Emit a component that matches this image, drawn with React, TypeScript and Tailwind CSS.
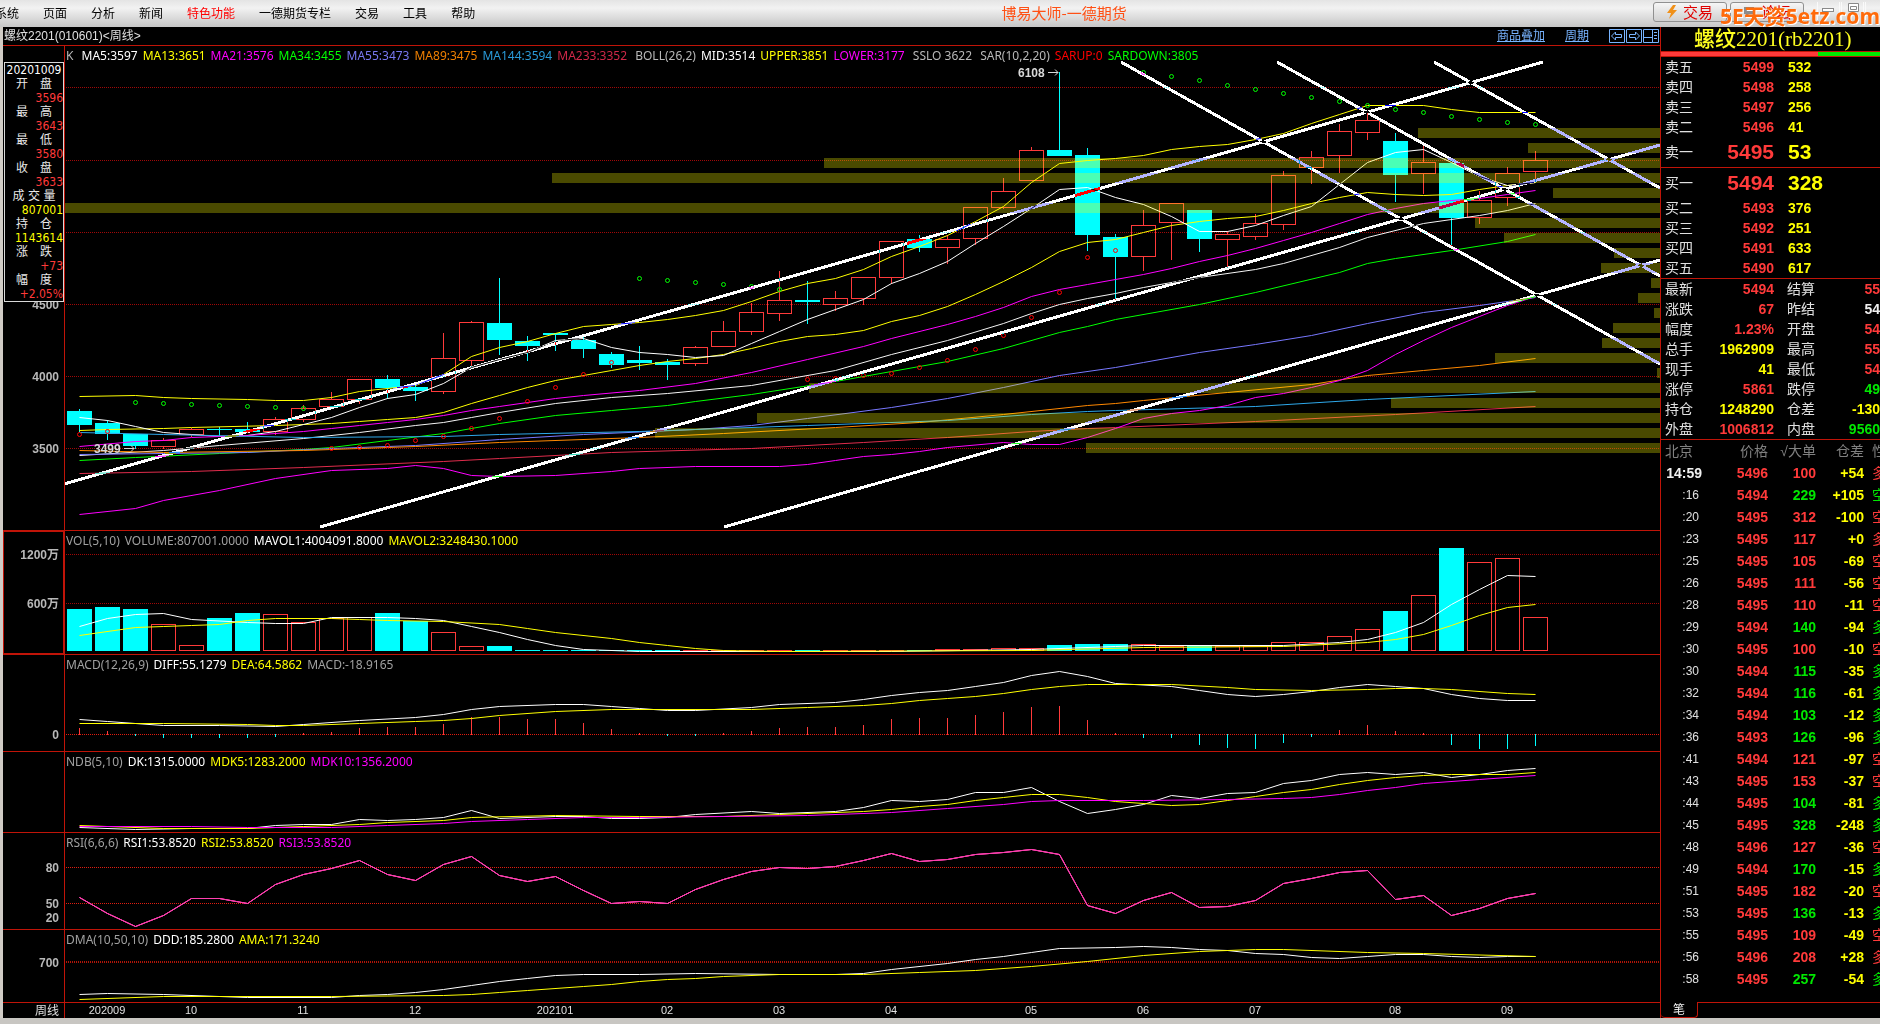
/**
 * Futures terminal: weekly candle chart with its indicator panes on the left,
 * order book, day statistics and tick list on the right.
 *
 * All panes share one coordinate space, so a bar's x is the same in each of them.
 */
import type { ReactNode } from "react";

type Pt = [index: number, y: number];
type Candle = [top: number, bottom: number, high: number, low: number, up: 0 | 1];

const LEFT = 3;
const AXIS = 64;
const RIGHT = 1660;
const STEP = 28;

const RED = "#ff3a3a";
const CYAN = "#00ffff";
const YELLOW = "#ffff00";

const barX = (i: number) => 79 + STEP * i;

const MENU = ["系统", "页面", "分析", "新闻", "特色功能", "一德期货专栏", "交易", "工具", "帮助"];

// body top, body bottom, wick top, wick bottom, rising
const CANDLES: Candle[] = [
  [411, 425, 409, 432, 0], [423, 434, 420, 440, 0], [434, 446, 434, 449, 0],
  [440, 447, 438, 449, 1], [429, 435, 428, 437, 1], [429, 430, 427, 437, 0],
  [429, 432, 422, 433, 0], [419, 432, 417, 435, 1], [408, 420, 405, 422, 1],
  [399, 407, 392, 407, 1], [379, 400, 379, 404, 1], [379, 388, 375, 399, 0],
  [387, 391, 385, 401, 0], [358, 392, 333, 394, 1], [322, 361, 321, 367, 1],
  [323, 340, 278, 355, 0], [341, 346, 336, 361, 0], [333, 335, 333, 351, 0],
  [340, 349, 337, 358, 0], [354, 365, 352, 368, 0], [360, 363, 346, 370, 0],
  [362, 365, 359, 380, 0], [347, 364, 346, 366, 1], [331, 347, 321, 347, 1],
  [312, 332, 303, 335, 1], [300, 314, 271, 321, 1], [300, 302, 281, 324, 0],
  [298, 305, 291, 311, 1], [277, 299, 277, 305, 1], [241, 278, 241, 284, 1],
  [239, 248, 235, 252, 0], [239, 248, 235, 264, 1], [207, 239, 207, 245, 1],
  [191, 208, 178, 209, 1], [150, 181, 147, 181, 1], [150, 156, 72, 156, 0],
  [155, 235, 148, 251, 0], [237, 257, 234, 300, 0], [225, 257, 210, 271, 1],
  [203, 223, 203, 260, 1], [210, 239, 210, 252, 0], [234, 240, 231, 268, 1],
  [223, 237, 214, 240, 1], [175, 225, 171, 230, 1], [157, 168, 151, 184, 1],
  [131, 156, 124, 173, 1], [120, 133, 113, 140, 1], [141, 175, 133, 202, 0],
  [162, 174, 146, 194, 1], [163, 218, 163, 246, 0], [200, 218, 191, 224, 1],
  [173, 198, 167, 206, 1], [160, 172, 151, 182, 1],
];

const MA_LINES: { color: string; points: Pt[] }[] = [
  {
    color: "#ffff00",
    points: [
      [0, 396], [2, 395], [3, 397], [4, 398], [6, 399], [7, 400], [8, 400], [9, 397], [10, 391], [11, 388],
      [12, 385], [13, 374], [14, 356], [15, 347], [16, 341], [17, 333], [18, 326], [19, 324], [20, 322],
      [21, 319], [22, 315], [23, 310], [24, 301], [25, 291], [26, 283], [27, 278], [28, 269], [29, 256],
      [30, 246], [31, 235], [32, 221], [33, 206], [34, 182], [35, 163], [36, 160], [37, 158], [38, 155],
      [39, 149], [40, 146], [41, 144], [42, 139], [43, 133], [44, 123], [45, 114], [46, 105], [48, 105],
      [49, 109], [50, 112], [52, 112],
    ],
  },
  {
    color: "#ffff00",
    points: [
      [0, 430], [1, 429], [3, 428], [4, 427], [7, 425], [9, 423], [10, 421], [11, 419], [12, 417], [13, 412],
      [14, 403], [15, 395], [16, 387], [17, 380], [18, 375], [19, 370], [20, 365], [21, 361], [22, 358],
      [23, 354], [24, 348], [25, 341], [26, 336], [27, 334], [28, 330], [29, 321], [30, 315], [31, 306],
      [32, 294], [33, 281], [34, 267], [35, 251], [36, 242], [37, 239], [38, 232], [39, 225], [40, 221],
      [41, 218], [42, 216], [43, 210], [44, 203], [45, 197], [46, 192], [47, 194], [48, 195], [49, 194],
      [50, 189], [51, 185], [52, 182],
    ],
  },
  {
    color: "#ffffff",
    points: [
      [0, 417], [1, 420], [2, 426], [3, 432], [4, 434], [5, 436], [6, 435], [7, 431], [8, 424], [9, 417],
      [10, 407], [11, 398], [12, 394], [13, 383], [14, 367], [15, 359], [16, 352], [17, 340], [18, 338],
      [19, 347], [20, 352], [21, 354], [22, 357], [23, 355], [24, 343], [25, 331], [26, 319], [27, 309],
      [28, 299], [29, 283], [30, 273], [31, 261], [32, 243], [33, 226], [34, 208], [35, 189], [36, 187],
      [37, 197], [38, 204], [39, 216], [40, 231], [41, 231], [42, 225], [43, 215], [44, 206], [45, 184],
      [46, 162], [47, 152], [48, 149], [49, 162], [50, 176], [51, 185], [52, 182],
    ],
  },
  {
    color: "#ff00ff",
    points: [
      [0, 446], [2, 441], [3, 440], [4, 437], [6, 435], [8, 431], [9, 428], [10, 425], [11, 422], [12, 419],
      [13, 415], [14, 410], [15, 406], [16, 402], [17, 398], [18, 395], [20, 390], [22, 383], [24, 372],
      [26, 359], [28, 346], [29, 338], [31, 324], [32, 316], [33, 307], [34, 296], [35, 289], [36, 284],
      [37, 279], [38, 274], [39, 268], [40, 261], [41, 255], [42, 248], [43, 240], [44, 232], [45, 223],
      [46, 214], [47, 208], [48, 203], [49, 200], [50, 198], [51, 194], [52, 190],
    ],
  },
  {
    color: "#f4f4f4",
    points: [
      [0, 455], [3, 450], [5, 445], [8, 438], [10, 432], [12, 425], [13, 422], [14, 417], [15, 412], [17, 403],
      [19, 397], [21, 393], [24, 385], [27, 370], [29, 354], [31, 340], [33, 323], [34, 313], [35, 304],
      [36, 298], [37, 293], [38, 287], [40, 277], [42, 269], [43, 263], [45, 247], [46, 237], [48, 223],
      [50, 215], [51, 210], [52, 203],
    ],
  },
  {
    color: "#00ff00",
    points: [
      [0, 460], [2, 457], [5, 453], [8, 449], [9, 447], [11, 440], [13, 433], [14, 428], [15, 423], [17, 415],
      [19, 410], [21, 405], [22, 401], [24, 394], [27, 381], [29, 371], [31, 361], [33, 348], [35, 332],
      [36, 326], [37, 319], [40, 304], [42, 292], [45, 272], [46, 263], [47, 258], [49, 250], [51, 241],
      [52, 234],
    ],
  },
  {
    color: "#7878ff",
    points: [
      [0, 454], [3, 453], [6, 452], [9, 448], [12, 445], [15, 439], [18, 434], [22, 429], [24, 425], [26, 418],
      [29, 407], [31, 398], [33, 387], [35, 375], [37, 367], [38, 362], [40, 352], [42, 344], [44, 335],
      [46, 323], [48, 312], [50, 305], [52, 297],
    ],
  },
  {
    color: "#ff8800",
    points: [
      [0, 450], [3, 452], [8, 450], [12, 446], [15, 442], [20, 437], [23, 433], [27, 427], [30, 422],
      [33, 414], [36, 405], [37, 403], [38, 400], [41, 392], [44, 384], [46, 375], [48, 370], [50, 365],
      [52, 358],
    ],
  },
  {
    color: "#2ea8ea",
    points: [
      [0, 432], [3, 434], [8, 437], [13, 436], [15, 434], [20, 431], [26, 425], [31, 420], [34, 414],
      [36, 411], [37, 410], [42, 406], [46, 399], [52, 391],
    ],
  },
  {
    color: "#e02c4c",
    points: [
      [0, 473], [4, 471], [8, 467], [13, 461], [15, 458], [19, 452], [24, 448], [28, 442], [31, 437],
      [34, 431], [36, 428], [37, 427], [42, 421], [47, 414], [52, 406],
    ],
  },
  {
    color: "#ff00ff",
    points: [
      [0, 514], [2, 508], [3, 500], [5, 490], [7, 478], [9, 470], [11, 468], [12, 465], [13, 468], [14, 475],
      [15, 476], [17, 475], [19, 471], [20, 468], [22, 466], [25, 466], [26, 464], [27, 460], [28, 456],
      [29, 454], [30, 451], [31, 447], [33, 442], [34, 444], [35, 444], [36, 437], [37, 428], [38, 418],
      [39, 413], [40, 410], [41, 405], [42, 397], [43, 393], [44, 387], [45, 380], [46, 370], [47, 354],
      [48, 340], [49, 327], [50, 316], [51, 305], [52, 296],
    ],
  },
];

const SAR_DOWN: Pt[] = [
  [2, 402], [3, 403], [4, 404], [5, 405], [6, 406], [7, 407], [8, 408], [20, 278], [21, 280], [22, 282],
  [23, 284], [24, 286], [25, 289], [38, 72], [39, 76], [40, 80], [41, 85], [42, 89], [43, 93], [44, 97],
  [45, 101], [46, 105], [47, 109], [48, 112], [49, 116], [50, 119], [51, 122], [52, 124],
];

const SAR_UP: Pt[] = [
  [0, 434], [1, 431], [9, 448], [10, 447], [11, 445], [12, 440], [13, 436], [14, 428], [15, 418], [16, 401],
  [17, 387], [18, 374], [19, 362], [26, 379], [27, 378], [28, 375], [29, 373], [30, 367], [31, 360],
  [32, 349], [33, 335], [34, 317], [35, 292], [36, 257], [37, 250],
];

// Volume profile, one bar every 15px from the top, given by its left end.
const PROFILE = [
  1418, 1528, 824, 552, 1553, 65, 1475, 1504, 1614, 1601, 1651,
  1638, 1654, 1613, 1602, 1495, 1657, 809, 1391, 757, 655, 1086,
];

const TREND_LINES = [
  [64, 484, 1543, 62],
  [320, 527, 1660, 145],
  [724, 527, 1660, 260],
  [1121, 62, 1660, 364],
  [1277, 62, 1660, 276],
  [1434, 62, 1660, 188],
];

const VOLUME = [
  609, 607, 609, 624, 645, 618, 613, 614, 622, 618, 617, 613, 621, 632, 646, 646, 650, 650, 650, 650,
  650, 650, 650, 650, 650, 650, 650, 650, 650, 650, 650, 649, 649, 648, 648, 645, 644, 644, 644, 646,
  646, 646, 646, 642, 642, 636, 629, 611, 595, 548, 562, 558, 617,
];

const VOL_MA5: Pt[] = [
  [0, 626], [1, 618], [2, 614], [3, 613], [4, 619], [6, 622], [7, 623], [8, 623], [9, 617], [11, 617],
  [12, 618], [13, 620], [14, 626], [15, 632], [16, 639], [17, 645], [18, 649], [20, 651], [29, 651],
  [34, 649], [37, 646], [38, 645], [43, 645], [45, 642], [46, 639], [47, 632], [48, 622], [49, 604],
  [50, 589], [51, 575], [52, 576],
];

const VOL_MA10: Pt[] = [
  [0, 635], [2, 627], [3, 626], [4, 625], [5, 624], [6, 620], [7, 618], [9, 618], [10, 619], [11, 620],
  [13, 621], [15, 624], [16, 628], [17, 632], [19, 638], [20, 642], [21, 645], [22, 648], [23, 650],
  [25, 651], [34, 650], [38, 647], [43, 646], [46, 642], [47, 639], [48, 634], [49, 625], [50, 615],
  [51, 607], [52, 604],
];

const DIFF: Pt[] = [
  [0, 719], [1, 721], [3, 725], [5, 725], [7, 726], [8, 724], [10, 720], [12, 717], [13, 714], [14, 709],
  [15, 706], [17, 704], [18, 704], [19, 706], [20, 708], [21, 710], [22, 710], [24, 707], [25, 704],
  [27, 702], [28, 699], [29, 695], [30, 692], [31, 690], [32, 686], [33, 682], [34, 675], [35, 671],
  [36, 676], [37, 683], [39, 686], [40, 690], [41, 694], [42, 696], [43, 694], [44, 691], [45, 687],
  [46, 684], [47, 686], [48, 688], [49, 694], [50, 698], [51, 700], [52, 700],
];

const DEA: Pt[] = [
  [0, 723], [3, 723], [6, 724], [7, 725], [8, 725], [10, 723], [12, 721], [13, 720], [14, 718], [15, 715],
  [17, 711], [19, 709], [24, 709], [26, 707], [28, 705], [29, 703], [30, 700], [31, 698], [32, 696],
  [33, 693], [34, 689], [35, 686], [36, 684], [39, 684], [41, 687], [42, 689], [44, 690], [46, 689],
  [47, 688], [48, 688], [49, 689], [51, 693], [52, 694],
];

const MACD_BARS = [
  728, 731, 735, 737, 737, 737, 737, 736, 733, 732, 728, 727, 727, 724, 717, 717, 719, 719, 723, 729,
  733, 735, 735, 733, 731, 728, 727, 727, 725, 719, 718, 718, 715, 712, 707, 706, 720, 733, 737, 737,
  744, 747, 748, 742, 736, 730, 725, 731, 733, 744, 748, 748, 745,
];

const DK: Pt[] = [
  [0, 827], [2, 829], [4, 828], [6, 828], [7, 825], [8, 824], [9, 824], [10, 819], [11, 820], [12, 819],
  [13, 817], [14, 810], [15, 818], [17, 816], [18, 816], [19, 818], [20, 818], [21, 817], [22, 814],
  [24, 811], [25, 813], [27, 811], [28, 807], [29, 800], [30, 801], [31, 799], [32, 792], [33, 792],
  [34, 787], [35, 801], [36, 813], [37, 809], [38, 804], [39, 795], [40, 798], [41, 793], [42, 792],
  [43, 783], [44, 780], [45, 774], [46, 772], [47, 774], [48, 772], [49, 777], [50, 774], [51, 770],
  [52, 768],
];

const MDK5: Pt[] = [
  [0, 825], [3, 828], [6, 828], [8, 826], [10, 824], [11, 822], [13, 820], [14, 817], [17, 815], [20, 816],
  [23, 816], [25, 814], [28, 811], [29, 809], [30, 806], [31, 804], [32, 800], [33, 797], [34, 794],
  [35, 794], [36, 797], [37, 801], [39, 805], [40, 804], [41, 800], [42, 796], [43, 792], [44, 789],
  [45, 784], [46, 780], [47, 777], [48, 775], [49, 774], [51, 774], [52, 772],
];

const MDK10: Pt[] = [
  [0, 826], [4, 826], [6, 827], [9, 827], [11, 825], [13, 823], [14, 821], [16, 819], [18, 817], [20, 817],
  [23, 816], [26, 815], [29, 812], [31, 808], [33, 804], [34, 801], [35, 800], [38, 800], [41, 799],
  [43, 798], [44, 797], [45, 794], [46, 790], [47, 787], [48, 783], [50, 779], [52, 775],
];

const RSI = [
  897, 913, 926, 915, 898, 898, 903, 884, 874, 868, 860, 874, 880, 864, 856, 875, 881, 876, 890, 903,
  901, 903, 889, 879, 871, 867, 868, 866, 860, 853, 861, 859, 854, 852, 849, 854, 905, 913, 900, 892,
  907, 906, 900, 883, 878, 872, 870, 899, 895, 915, 908, 898, 893,
].map((y, i): Pt => [i, y]);

const DDD: Pt[] = [
  [0, 994], [1, 993], [3, 994], [5, 996], [6, 997], [9, 997], [10, 995], [11, 994], [12, 992], [13, 989],
  [14, 985], [15, 981], [16, 978], [17, 975], [18, 974], [20, 974], [22, 973], [25, 974], [27, 974],
  [28, 973], [29, 969], [31, 963], [32, 959], [33, 956], [34, 952], [35, 948], [37, 947], [38, 946],
  [39, 947], [40, 949], [41, 950], [42, 953], [43, 954], [44, 957], [45, 958], [46, 956], [47, 954],
  [48, 954], [49, 956], [50, 957], [51, 956], [52, 956],
];

const AMA: Pt[] = [
  [0, 999], [3, 996], [9, 996], [13, 995], [14, 994], [15, 992], [16, 990], [18, 986], [19, 984],
  [20, 981], [21, 979], [22, 978], [23, 976], [25, 974], [28, 974], [30, 972], [32, 970], [34, 966],
  [36, 961], [38, 955], [40, 951], [42, 949], [43, 949], [46, 952], [48, 953], [52, 956],
];

const MONTHS: [number, string][] = [
  [1, "202009"], [4, "10"], [8, "11"], [12, "12"], [17, "202101"], [21, "02"], [25, "03"],
  [29, "04"], [34, "05"], [38, "06"], [42, "07"], [47, "08"], [51, "09"],
];

const CURSOR_INFO: [string, string, string][] = [
  ["开　盘", "3596", "text-[#ff3a3a]"],
  ["最　高", "3643", "text-[#ff3a3a]"],
  ["最　低", "3580", "text-[#ff3a3a]"],
  ["收　盘", "3633", "text-[#ff3a3a]"],
  ["成 交 量", "807001", "text-[#ffff00]"],
  ["持　仓", "1143614", "text-[#ffff00]"],
  ["涨　跌", "+73", "text-[#ff3a3a]"],
  ["幅　度", "+2.05%", "text-[#ff3a3a]"],
];

const ASKS = [["卖五", "5499", "532"], ["卖四", "5498", "258"], ["卖三", "5497", "256"], ["卖二", "5496", "41"], ["卖一", "5495", "53"]];
const BIDS = [["买一", "5494", "328"], ["买二", "5493", "376"], ["买三", "5492", "251"], ["买四", "5491", "633"], ["买五", "5490", "617"]];

const R = "text-[#ff3a3a]";
const G = "text-[#00e800]";
const Y = "text-[#ffff00]";
const W = "text-[#f0f0f0]";

const STATS: [string, string, string, string, string, string][] = [
  ["最新", "5494", R, "结算", "55", R],
  ["涨跌", "67", R, "昨结", "54", W],
  ["幅度", "1.23%", R, "开盘", "54", R],
  ["总手", "1962909", Y, "最高", "55", R],
  ["现手", "41", Y, "最低", "54", R],
  ["涨停", "5861", R, "跌停", "49", G],
  ["持仓", "1248290", Y, "仓差", "-130", Y],
  ["外盘", "1006812", R, "内盘", "9560", G],
];

const TICKS: [string, string, string, string, string, string][] = [
  ["14:59", "5496", "100", "+54", "多", R],
  [":16", "5494", "229", "+105", "空", G],
  [":20", "5495", "312", "-100", "空", R],
  [":23", "5495", "117", "+0", "多", R],
  [":25", "5495", "105", "-69", "空", R],
  [":26", "5495", "111", "-56", "空", R],
  [":28", "5495", "110", "-11", "空", R],
  [":29", "5494", "140", "-94", "多", G],
  [":30", "5495", "100", "-10", "空", R],
  [":30", "5494", "115", "-35", "多", G],
  [":32", "5494", "116", "-61", "多", G],
  [":34", "5494", "103", "-12", "多", G],
  [":36", "5493", "126", "-96", "多", G],
  [":41", "5494", "121", "-97", "空", R],
  [":43", "5495", "153", "-37", "空", R],
  [":44", "5495", "104", "-81", "多", G],
  [":45", "5495", "328", "-248", "多", G],
  [":48", "5496", "127", "-36", "空", R],
  [":49", "5494", "170", "-15", "多", G],
  [":51", "5495", "182", "-20", "空", R],
  [":53", "5495", "136", "-13", "多", G],
  [":55", "5495", "109", "-49", "空", R],
  [":56", "5496", "208", "+28", "多", R],
  [":58", "5495", "257", "-54", "多", G],
];

function Line({ points, color }: { points: Pt[]; color: string }) {
  return (
    <polyline
      points={points.map(([i, y]) => `${barX(i) + 0.5},${y + 0.5}`).join(" ")}
      fill="none"
      stroke={color}
    />
  );
}

function Grid({ at, color = "#a00808" }: { at: number[]; color?: string }) {
  return (
    <>
      {at.map((y) => (
        <line key={y} x1={AXIS + 2} x2={RIGHT} y1={y + 0.5} y2={y + 0.5} stroke={color} strokeDasharray="1 1" />
      ))}
    </>
  );
}

function AxisLabel({ y, children }: { y: number; children: string }) {
  return (
    <text
      x={59}
      y={y + 5}
      textAnchor="end"
      className="fill-[#b8b8b8] font-['Liberation_Sans','Noto_Sans_CJK_SC',sans-serif] text-[12px] font-bold"
    >
      {children}
    </text>
  );
}

function Legend({ items }: { items: [string, string][] }) {
  return (
    <div className="absolute left-[63px] top-[2px] flex gap-[5px] whitespace-pre font-['Noto_Sans',sans-serif] text-[12px] leading-4">
      {items.map(([text, color]) => (
        <span key={text} className={color}>
          {text}
        </span>
      ))}
    </div>
  );
}

/** One chart pane; `top` and `height` select its slice of the shared coordinate space. */
function Pane({ top, height, legend, children }: {
  top: number;
  height: number;
  legend?: [string, string][];
  children: ReactNode;
}) {
  return (
    <section className="relative border-b border-[#c01408]">
      <svg viewBox={`${LEFT} ${top} ${RIGHT - LEFT} ${height}`} className="block w-full">
        {children}
        <line x1={AXIS + 0.5} x2={AXIS + 0.5} y1={top} y2={top + height} stroke="#c01408" />
      </svg>
      {legend && <Legend items={legend} />}
    </section>
  );
}

function PricePane() {
  return (
    <Pane
      top={46}
      height={484}
      legend={[
        ["K ", "text-[#b8b8b8]"],
        ["MA5:3597", "text-white"],
        ["MA13:3651", "text-[#ffff00]"],
        ["MA21:3576", "text-[#ff00ff]"],
        ["MA34:3455", "text-[#00ff00]"],
        ["MA55:3473", "text-[#7878f0]"],
        ["MA89:3475", "text-[#f08000]"],
        ["MA144:3594", "text-[#2a9ad8]"],
        ["MA233:3352 ", "text-[#d02848]"],
        ["BOLL(26,2)", "text-[#b8b8b8]"],
        ["MID:3514", "text-white"],
        ["UPPER:3851", "text-[#ffff00]"],
        ["LOWER:3177 ", "text-[#ff00ff]"],
        ["SSLO 3622 ", "text-[#b8b8b8]"],
        ["SAR(10,2,20)", "text-[#b8b8b8]"],
        ["SARUP:0", "text-[#ff0000]"],
        ["SARDOWN:3805", "text-[#00ff00]"],
      ]}
    >
      <Grid at={[87, 160, 232, 304, 376, 448]} />
      <AxisLabel y={304}>4500</AxisLabel>
      <AxisLabel y={376}>4000</AxisLabel>
      <AxisLabel y={448}>3500</AxisLabel>

      {CANDLES.map(([top, bottom, high, low, up], i) => {
        const x = barX(i);
        return up ? (
          <g key={i} stroke={RED} fill="none">
            <path d={`M${x + 0.5} ${high}V${top}M${x + 0.5} ${bottom}V${low}`} />
            <rect x={x - 11.5} y={top + 0.5} width={24} height={bottom - top - 1} />
          </g>
        ) : (
          <g key={i} fill={CYAN}>
            <rect x={x} y={high} width={1} height={low - high} />
            <rect x={x - 12} y={top} width={25} height={bottom - top} />
          </g>
        );
      })}

      {MA_LINES.map((line, i) => (
        <Line key={i} {...line} />
      ))}

      {PROFILE.map((x, i) => (
        <rect key={i} x={x} y={128 + 15 * i} width={RIGHT - x} height={10} fill={YELLOW} opacity={0.29} />
      ))}

      {SAR_DOWN.map(([i, y]) => (
        <ellipse key={i} cx={barX(i) + 0.5} cy={y + 0.5} rx={2} ry={2} fill="none" stroke="#00ff00" />
      ))}
      {SAR_UP.map(([i, y]) => (
        <ellipse key={i} cx={barX(i) + 0.5} cy={y + 0.5} rx={2} ry={2} fill="none" stroke="#ff0000" />
      ))}

      {/* Drawn inverted, so they change colour over bars and at crossings. */}
      {TREND_LINES.map(([x1, y1, x2, y2], i) => (
        <line
          key={i}
          x1={x1}
          y1={y1}
          x2={x2}
          y2={y2}
          stroke="#fff"
          strokeWidth={3}
          shapeRendering="crispEdges"
          className="mix-blend-difference"
        />
      ))}

      <g className="fill-[#d8d8d8] font-['Liberation_Sans',sans-serif] text-[12px] font-bold">
        <text x={94} y={453}>3499</text>
        <text x={1018} y={77}>6108</text>
      </g>
      <path d="M124 448.5h10m-3-3 3 3-3 3M1048 72.5h10m-3-3 3 3-3 3" fill="none" stroke="#d8d8d8" />
    </Pane>
  );
}

function VolumePane() {
  return (
    <Pane
      top={531}
      height={123}
      legend={[
        ["VOL(5,10)", "text-[#a0a0a0]"],
        ["VOLUME:807001.0000", "text-[#a0a0a0]"],
        ["MAVOL1:4004091.8000", "text-white"],
        ["MAVOL2:3248430.1000", "text-[#ffff00]"],
      ]}
    >
      <Grid at={[554, 603]} />
      <rect x={3} y={531} width={61} height={123} fill="none" stroke="#c01408" strokeWidth={2} />
      <AxisLabel y={554}>1200万</AxisLabel>
      <AxisLabel y={603}>600万</AxisLabel>
      {VOLUME.map((y, i) => {
        const x = barX(i);
        return CANDLES[i][4] ? (
          <rect key={i} x={x - 11.5} y={y + 0.5} width={24} height={Math.max(651 - y - 1, 0.5)} fill="none" stroke={RED} />
        ) : (
          <rect key={i} x={x - 12} y={y} width={25} height={651 - y} fill={CYAN} />
        );
      })}
      <Line points={VOL_MA5} color="#ffffff" />
      <Line points={VOL_MA10} color="#ffff00" />
    </Pane>
  );
}

function MacdPane() {
  return (
    <Pane
      top={655}
      height={96}
      legend={[
        ["MACD(12,26,9)", "text-[#a0a0a0]"],
        ["DIFF:55.1279", "text-white"],
        ["DEA:64.5862", "text-[#ffff00]"],
        ["MACD:-18.9165", "text-[#a0a0a0]"],
      ]}
    >
      <Grid at={[734]} color="#e01c10" />
      <AxisLabel y={734}>0</AxisLabel>
      {MACD_BARS.map((y, i) => (
        <rect
          key={i}
          x={barX(i)}
          y={Math.min(y, 734)}
          width={1}
          height={Math.abs(734 - y) + 1}
          fill={y < 734 ? RED : CYAN}
        />
      ))}
      <Line points={DIFF} color="#ffffff" />
      <Line points={DEA} color="#ffff00" />
    </Pane>
  );
}

function NdbPane() {
  return (
    <Pane
      top={752}
      height={80}
      legend={[
        ["NDB(5,10)", "text-[#a0a0a0]"],
        ["DK:1315.0000", "text-white"],
        ["MDK5:1283.2000", "text-[#ffff00]"],
        ["MDK10:1356.2000", "text-[#ff00ff]"],
      ]}
    >
      <Line points={DK} color="#ffffff" />
      <Line points={MDK5} color="#ffff00" />
      <Line points={MDK10} color="#ff00ff" />
    </Pane>
  );
}

function RsiPane() {
  return (
    <Pane
      top={833}
      height={96}
      legend={[
        ["RSI(6,6,6)", "text-[#a0a0a0]"],
        ["RSI1:53.8520", "text-white"],
        ["RSI2:53.8520", "text-[#ffff00]"],
        ["RSI3:53.8520", "text-[#ff00ff]"],
      ]}
    >
      <Grid at={[867, 903]} color="#e01c10" />
      <AxisLabel y={867}>80</AxisLabel>
      <AxisLabel y={903}>50</AxisLabel>
      <AxisLabel y={917}>20</AxisLabel>
      {/* RSI1-3 share one period, so the three lines coincide. */}
      <Line points={RSI} color="#ff40b0" />
      <Line points={RSI} color="#ff40b0" />
      <Line points={RSI} color="#ff40b0" />
    </Pane>
  );
}

function DmaPane() {
  return (
    <Pane
      top={930}
      height={72}
      legend={[
        ["DMA(10,50,10)", "text-[#a0a0a0]"],
        ["DDD:185.2800", "text-white"],
        ["AMA:171.3240", "text-[#ffff00]"],
      ]}
    >
      <Grid at={[961, 962]} color="#b01408" />
      <AxisLabel y={962}>700</AxisLabel>
      <Line points={DDD} color="#ffffff" />
      <Line points={AMA} color="#ffff00" />
    </Pane>
  );
}

function TimeAxis() {
  return (
    <svg viewBox="3 1003 1657 15" className="block w-full">
      <line x1={64.5} x2={64.5} y1={1003} y2={1018} stroke="#c01408" />
      <g className="fill-[#e0e0e0] font-['Liberation_Sans','Noto_Sans_CJK_SC',sans-serif] text-[12px]">
        <text x={59} y={1015} textAnchor="end">周线</text>
        {MONTHS.map(([i, label]) => (
          <text key={label} x={barX(i)} y={1014} textAnchor="middle" className="text-[11px]">
            {label}
          </text>
        ))}
      </g>
    </svg>
  );
}

function CursorInfo() {
  return (
    <aside className="absolute left-[1px] top-[35px] w-[60px] border border-[#d8d8d8] bg-black font-['DejaVu_Sans_Condensed','Noto_Sans_CJK_SC',sans-serif] text-[12px] leading-[14px]">
      <p className="text-center text-white">20201009</p>
      <dl>
        {CURSOR_INFO.map(([label, value, color]) => (
          <div key={label}>
            <dt className="whitespace-pre text-center text-[#e8e8e8]">{label}</dt>
            <dd className={`text-right ${color}`}>{value}</dd>
          </div>
        ))}
      </dl>
    </aside>
  );
}

function MenuBar() {
  return (
    <header className="relative flex h-[27px] items-start justify-between overflow-hidden bg-linear-to-b from-[#e4e4e4] via-[#f2f2f2] via-30% to-[#c6c6c6] font-['Noto_Sans_CJK_SC',sans-serif]">
      <nav className="-ml-[5px] flex gap-6 pt-1 text-[12px] leading-[18px] text-black">
        {MENU.map((item) => (
          <button key={item} type="button" className={item === "特色功能" ? "text-[#ff0000]" : ""}>
            {item}
          </button>
        ))}
      </nav>
      <h1 className="pt-[3px] text-[15px] leading-5 text-[#ff5014]">博易大师-一德期货</h1>
      <div className="flex shrink-0 gap-[3px] pt-[2px]">
        <button
          type="button"
          className="flex h-5 w-[74px] items-center justify-center gap-[6px] rounded-[3px] border border-[#909090] bg-linear-to-b from-[#f6f6f6] to-[#d0d0d0] text-[15px] leading-5 text-[#e00000]"
        >
          <svg viewBox="0 0 10 14" className="h-[14px] w-[10px]">
            <path d="M6 0 0 8h4l-2 6 8-9H6l3-5z" fill="#f09018" />
          </svg>
          交易
        </button>
        <button
          type="button"
          className="flex h-5 w-[74px] items-center justify-center gap-[6px] rounded-[3px] border border-[#909090] bg-linear-to-b from-[#f6f6f6] to-[#d0d0d0] text-[15px] leading-5 text-[#e00000]"
        >
          <svg viewBox="0 0 12 12" className="size-3">
            <path d="M1 1h10v7H6l-3 3V8H1z" fill="#8c8c8c" />
          </svg>
          论坛
        </button>
        <svg viewBox="0 0 73 20" className="h-5 w-[73px]" fill="none">
          <path d="M10.5-2v20M32.5-2v20M34.5-2v20M56.5-2v20M58.5-2v20" stroke="#fafafa" />
          <rect x="15.500" y="6.500" width="11" height="3" stroke="#8a8a8a" fill="#fff" />
          <path d="M41.500 1.500h10v8h-10zM43.500 4.500h6v3h-6z" stroke="#8a8a8a" fill="#fff" />
        </svg>
      </div>
      <span className="absolute right-0 top-[3px] whitespace-nowrap font-['Open_Sans','Noto_Sans_CJK_SC',sans-serif] text-[21px] font-bold leading-[26px] text-[#ff6a0a] [text-shadow:1px_1px_0_#fff]">
        5E天资5etz.com
      </span>
    </header>
  );
}

function ChartHeader() {
  return (
    <div className="flex h-[19px] items-center justify-between border-b border-[#c01408] pl-[1px] font-['Liberation_Sans','Noto_Sans_CJK_SC',sans-serif] text-[12px] leading-[18px]">
      <h2 className="text-[#e0e0e0]">螺纹2201(010601)&lt;周线&gt;</h2>
      <div className="flex items-center text-[#78b4ff]">
        <a href="#overlay" className="mr-5 underline">商品叠加</a>
        <a href="#period" className="mr-5 underline">周期</a>
        <button type="button" aria-label="后退">
          <svg viewBox="0 0 17 14" className="h-[14px] w-[17px]" fill="none" stroke="currentColor">
            <path d="M.5.500h15v13H.5zM2.500 7 6.500 3v2.500h6v3h-6V11z" />
          </svg>
        </button>
        <button type="button" aria-label="前进">
          <svg viewBox="0 0 17 14" className="h-[14px] w-[17px]" fill="none" stroke="currentColor">
            <path d="M.5.500h15v13H.5zM13.500 7 9.500 3v2.500h-6v3h6V11z" />
          </svg>
        </button>
        <button type="button" aria-label="布局">
          <svg viewBox="0 0 17 14" className="h-[14px] w-[17px]" fill="none" stroke="currentColor">
            <path d="M.5.500h15v13H.5zM.5 8.500h9M9.500.500v13" />
            <path d="M11 3.500h3M11 6.500h3M11 9.500h3" />
          </svg>
        </button>
      </div>
    </div>
  );
}

function BookSide({ rows, best }: { rows: string[][]; best: string }) {
  return (
    <table className="w-full table-fixed border-b border-[#c01408]">
      <colgroup>
        <col className="w-[33px]" />
        <col className="w-20" />
        <col />
      </colgroup>
      <tbody>
        {rows.map(([label, price, qty]) => {
          const size = label === best ? "text-[21px]" : "text-[14px]";
          return (
            <tr key={label} className={label === best ? "h-[30px]" : "h-5"}>
              <th className="pl-1 text-left text-[14px] font-normal text-[#e0e0e0]">{label}</th>
              <td className={`text-right font-bold text-[#ff3a3a] ${size}`}>{price}</td>
              <td className={`pl-[14px] font-bold text-[#ffff00] ${size}`}>{qty}</td>
            </tr>
          );
        })}
      </tbody>
    </table>
  );
}

function QuotePanel() {
  return (
    <aside className="flex w-[220px] shrink-0 flex-col overflow-hidden border-l border-[#c01408] bg-black font-['Liberation_Sans','Noto_Sans_CJK_SC',sans-serif] text-[14px] leading-5">
      <h2 className="h-6 whitespace-nowrap pl-[33px] font-['Liberation_Serif','Noto_Sans_CJK_SC',serif] text-[21px] font-medium leading-6 text-[#ffff20]">
        螺纹2201(rb2201)
      </h2>
      <div className="flex h-[6px] border-y border-[#c01408]">
        <div className="w-[157px] bg-[#ff3a3a]" />
        <div className="flex-1 bg-[#00e800]" />
      </div>
      <BookSide rows={ASKS} best="卖一" />
      <BookSide rows={BIDS} best="买一" />

      <table className="w-full table-fixed border-b border-[#c01408]">
        <colgroup>
          <col className="w-[33px]" />
          <col className="w-20" />
          <col className="w-[46px]" />
          <col />
        </colgroup>
        <tbody>
          {STATS.map(([label, value, color, label2, value2, color2]) => (
            <tr key={label} className="h-5">
              <th className="pl-1 text-left font-normal text-[#e0e0e0]">{label}</th>
              <td className={`text-right font-bold ${color}`}>{value}</td>
              <th className="pl-[13px] text-left font-normal text-[#e0e0e0]">{label2}</th>
              <td className={`text-right font-bold ${color2}`}>{value2}</td>
            </tr>
          ))}
        </tbody>
      </table>

      <table className="w-full table-fixed">
        <colgroup>
          <col className="w-[41px]" />
          <col className="w-[66px]" />
          <col className="w-12" />
          <col className="w-12" />
          <col />
        </colgroup>
        <thead>
          <tr className="h-[22px] whitespace-nowrap text-right text-[#808080]">
            <th className="pl-1 text-left font-normal">北京</th>
            <th className="font-normal">价格</th>
            <th className="font-normal">√大单</th>
            <th className="font-normal">仓差</th>
            <th className="overflow-hidden pl-2 text-left font-normal">性</th>
          </tr>
        </thead>
        <tbody>
          {TICKS.map(([time, price, size, delta, kind, color], i) => (
            <tr key={i} className="h-[22px] text-right font-bold">
              {i === 0 ? (
                <td className="text-[#f0f0f0]">{time}</td>
              ) : (
                <td className="pr-[3px] text-[12px] font-normal text-[#e0e0e0]">{time}</td>
              )}
              <td className="text-[#ff3a3a]">{price}</td>
              <td className={color}>{size}</td>
              <td className="text-[#ffff00]">{delta}</td>
              <td className={`overflow-hidden whitespace-nowrap pl-2 text-left font-normal ${color}`}>{kind}</td>
            </tr>
          ))}
        </tbody>
      </table>

      <div className="mt-auto flex">
        <button
          type="button"
          className="h-4 w-[37px] rounded-b-sm border-b border-r border-[#c01408] text-[12px] leading-4 text-[#f0f0f0]"
        >
          笔
        </button>
        <div className="flex-1 border-t border-[#c01408]" />
      </div>
    </aside>
  );
}

export default function App() {
  return (
    <div className="flex min-h-screen flex-col overflow-hidden bg-[#c8c6c2]">
      <MenuBar />
      <main className="flex border-l-[3px] border-[#d0ccc6]">
        <div className="relative min-w-0 flex-1 bg-black">
          <ChartHeader />
          <PricePane />
          <VolumePane />
          <MacdPane />
          <NdbPane />
          <RsiPane />
          <DmaPane />
          <TimeAxis />
          <CursorInfo />
        </div>
        <QuotePanel />
      </main>
    </div>
  );
}
